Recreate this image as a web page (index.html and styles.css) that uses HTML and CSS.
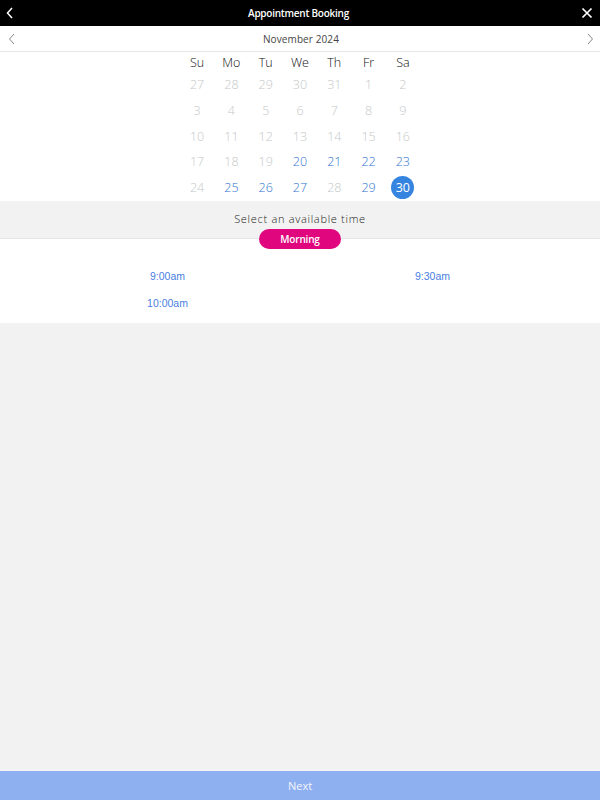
FILE: index.html
```html
<!DOCTYPE html>
<html>
<head>
<meta charset="utf-8">
<link rel="stylesheet" href="styles.css">
</head>
<body>
<div class="app">
  <header class="topbar">
    <span class="tb-btn left">
      <svg width="10" height="14" viewBox="0 0 10 14"><path d="M7 2 L2.5 7 L7 12" fill="none" stroke="#fff" stroke-width="1.5"/></svg>
    </span>
    <span class="title">Appointment Booking</span>
    <span class="tb-btn right">
      <svg width="12" height="12" viewBox="0 0 12 12"><path d="M1.5 1.5 L10.5 10.5 M10.5 1.5 L1.5 10.5" stroke="#fff" stroke-width="1.7"/></svg>
    </span>
  </header>
  <div class="monthbar">
    <span class="nav">
      <svg width="8" height="12" viewBox="0 0 8 12"><path d="M6 1 L1.5 6 L6 11" fill="none" stroke="#777" stroke-width="0.9"/></svg>
    </span>
    <span class="month">November 2024</span>
    <span class="nav">
      <svg width="8" height="12" viewBox="0 0 8 12"><path d="M2 1 L6.5 6 L2 11" fill="none" stroke="#777" stroke-width="0.9"/></svg>
    </span>
  </div>
  <div class="calendar">
    <div class="dow">Su</div><div class="dow">Mo</div><div class="dow">Tu</div><div class="dow">We</div><div class="dow">Th</div><div class="dow">Fr</div><div class="dow">Sa</div>
    <div class="d off">27</div><div class="d off">28</div><div class="d off">29</div><div class="d off">30</div><div class="d off">31</div><div class="d off">1</div><div class="d off">2</div>
    <div class="d off">3</div><div class="d off">4</div><div class="d off">5</div><div class="d off">6</div><div class="d off">7</div><div class="d off">8</div><div class="d off">9</div>
    <div class="d off">10</div><div class="d off">11</div><div class="d off">12</div><div class="d off">13</div><div class="d off">14</div><div class="d off">15</div><div class="d off">16</div>
    <div class="d off">17</div><div class="d off">18</div><div class="d off">19</div><div class="d on">20</div><div class="d on">21</div><div class="d on">22</div><div class="d on">23</div>
    <div class="d off">24</div><div class="d on">25</div><div class="d on">26</div><div class="d on">27</div><div class="d off">28</div><div class="d on">29</div><div class="d sel"><span>30</span></div>
  </div>
  <div class="select-bar">Select an available time</div>
  <div class="slots">
    <span class="pill">Morning</span>
    <div class="slot-grid">
      <div class="slot">9:00am</div>
      <div class="slot">9:30am</div>
      <div class="slot">10:00am</div>
    </div>
  </div>
  <div class="filler"></div>
  <div class="next">Next</div>
</div>
</body>
</html>
```
FILE: styles.css
```css
html, body { margin: 0; padding: 0; }
body { font-family: "Open Sans", sans-serif; background: #f2f2f2; }
.app { width: 600px; height: 800px; display: flex; flex-direction: column; }
.topbar {
  height: 26px; background: #000; color: #fff;
  display: flex; align-items: center; justify-content: space-between;
  padding: 0 6px 0 3px; box-sizing: border-box; flex-shrink: 0;
}
.tb-btn { width: 14px; height: 14px; display: flex; align-items: center; justify-content: center; }
.title { font-size: 10px; font-weight: 600; letter-spacing: -0.25px; }
.monthbar {
  height: 26px; background: #fff; border-bottom: 1px solid #e4e8e8;
  display: flex; align-items: center; justify-content: space-between;
  padding: 0 6px 0 8px; box-sizing: border-box; flex-shrink: 0;
}
.month { font-size: 10px; color: #444; font-weight: 400; letter-spacing: 0.1px; }
.nav { display: flex; align-items: center; }
.calendar {
  background: #fff; display: grid;
  grid-template-columns: repeat(7, 34.3px);
  grid-template-rows: 20px repeat(5, 25.7px);
  justify-content: center;
  height: 149px; box-sizing: border-box; align-content: start;
  font-weight: 300;
}
.dow { font-size: 12.5px; color: #111; display: flex; align-items: center; justify-content: center; }
.d { font-size: 12.5px; display: flex; align-items: center; justify-content: center; }
.off { color: #c4c8c8; }
.on { color: #2f74d0; }
.sel span {
  width: 23px; height: 23px; border-radius: 50%; background: #3585e0; color: #fff;
  display: flex; align-items: center; justify-content: center; font-weight: 400;
}
.select-bar {
  height: 38px; background: #f2f2f2; border-bottom: 1px solid #e2e6e8;
  box-sizing: border-box; text-align: center; font-size: 11px; color: #222;
  letter-spacing: 0.7px; padding-top: 10px; flex-shrink: 0; font-weight: 300;
}
.slots { background: #fff; height: 84px; position: relative; flex-shrink: 0; }
.pill {
  position: absolute; left: 259px; top: -10px; width: 82px; height: 20px;
  border-radius: 10px; background: #e0067e; color: #fff; font-size: 10px; font-weight: 600;
  display: flex; align-items: center; justify-content: center; letter-spacing: -0.2px;
}
.slot-grid {
  display: grid; grid-template-columns: 1fr 1fr; padding: 30px 35px 0;
  row-gap: 13px;
}
.slot { font-family: "Liberation Sans", Arial, sans-serif; font-size: 10.5px; color: #4a80e0; text-align: center; height: 14px; line-height: 14px; }
.filler { flex: 1; background: #f2f2f2; }
.next {
  height: 29px; background: #8fb0f0; color: #f4f6fc; font-size: 11px;
  display: flex; align-items: center; justify-content: center; flex-shrink: 0;
}
```
